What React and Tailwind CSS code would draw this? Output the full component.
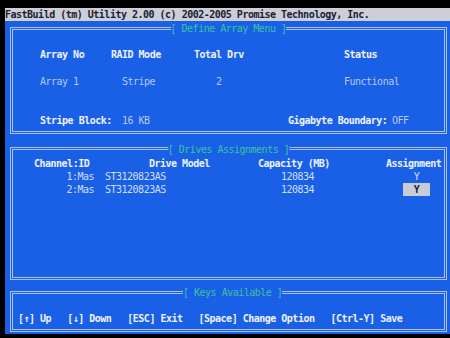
export default function App() {
  const label = "font-bold text-[#eef2ff]";
  const value = "text-[#b8c8f2]";

  return (
    <div className="w-[450px] h-[338px] bg-black overflow-hidden flex flex-col pt-[8px] pl-[5px] pb-[4px] font-['DejaVu_Sans_Mono',monospace] text-[10px] tracking-[-0.5px] leading-[12px]">
      {/* title bar */}
      <div className="h-[13px] bg-[#cdced6] text-[#1c1c34] font-bold leading-[13px] whitespace-nowrap">
        FastBuild (tm) Utility 2.00 (c) 2002-2005 Promise Technology, Inc.
      </div>

      <div className="flex-1 bg-[#1a60e6] flex flex-col pl-[5px] pr-[3px] pt-[6px]">
        {/* Define Array Menu */}
        <div className="relative h-[107px] border-[3px] border-double border-[#a9c0f2] pt-[19px] pl-[27px]">
          <span className="absolute -top-[7px] left-1/2 -translate-x-1/2 bg-[#1a60e6] text-[#38c49a] whitespace-nowrap">
            [ Define Array Menu ]
          </span>
          <div className={`flex ${label}`}>
            <span className="w-[71px]">Array No</span>
            <span className="w-[83px]">RAID Mode</span>
            <span className="w-[150px]">Total Drv</span>
            <span>Status</span>
          </div>
          <div className={`flex mt-[15px] ${value}`}>
            <span className="w-[82px]">Array 1</span>
            <span className="w-[94px]">Stripe</span>
            <span className="w-[128px]">2</span>
            <span>Functional</span>
          </div>
          <div className="flex mt-[27px]">
            <span className={`w-[82px] ${label}`}>Stripe Block:</span>
            <span className={`w-[166px] ${value}`}>16 KB</span>
            <span className={`w-[104px] ${label}`}>Gigabyte Boundary:</span>
            <span className={value}>OFF</span>
          </div>
        </div>

        {/* Drives Assignments */}
        <div className="relative mt-[13px] h-[133px] border-[3px] border-double border-[#a9c0f2] pt-[7px] pl-[21px] leading-[13px]">
          <span className="absolute -top-[7px] left-1/2 -translate-x-1/2 bg-[#1a60e6] text-[#38c49a] whitespace-nowrap">
            [ Drives Assignments ]
          </span>
          <div className={`flex ${label}`}>
            <span className="w-[71px]">Channel:ID</span>
            <span className="w-[153px] pl-[44px]">Drive Model</span>
            <span className="w-[128px]">Capacity (MB)</span>
            <span className="whitespace-nowrap">Assignment</span>
          </div>
          {["1:Mas", "2:Mas"].map((ch, i) => (
            <div key={ch} className="flex text-[#d4def8]">
              <span className="w-[71px] text-right pr-[11px]">{ch}</span>
              <span className="w-[153px]">ST3120823AS</span>
              <span className="w-[128px] pl-[23px]">120834</span>
              <span className="pl-[17px]">
                {i === 1 ? (
                  <span className="inline-block w-[27px] h-[13px] bg-[#c8ccd6] text-[#1c1c34] text-center font-bold">
                    Y
                  </span>
                ) : (
                  <span className="inline-block w-[27px] text-center">Y</span>
                )}
              </span>
            </div>
          ))}
        </div>

        {/* Keys Available */}
        <div className="relative mt-[11px] h-[41px] border-[3px] border-double border-[#a9c0f2] pt-[19px] pl-[5px]">
          <span className="absolute -top-[7px] left-[170px] bg-[#1a60e6] text-[#38c49a] whitespace-nowrap">
            [ Keys Available ]
          </span>
          <div className={`flex gap-[16px] whitespace-nowrap ${label}`}>
            <span>[↑] Up</span>
            <span>[↓] Down</span>
            <span>[ESC] Exit</span>
            <span>[Space] Change Option</span>
            <span>[Ctrl-Y] Save</span>
          </div>
        </div>
      </div>
    </div>
  );
}
